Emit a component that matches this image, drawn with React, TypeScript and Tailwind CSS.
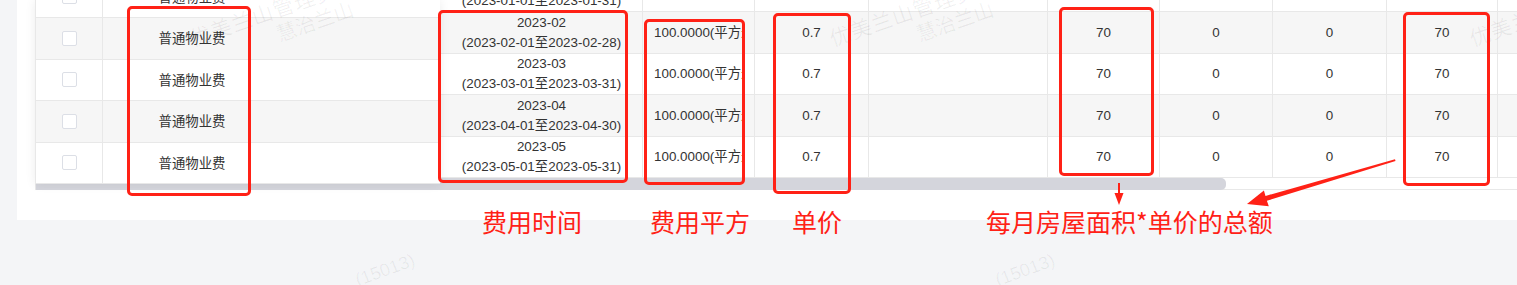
import { clsx as cn } from 'clsx';

const grid =
  'grid grid-cols-[68px_178px_160px_202px_112px_114px_179px_112px_113px_114px_111px_1fr]';
const fixedGrid = 'grid grid-cols-[68px_178px_159px]';
const line = 'border-[#e8e8e8]';

const rows = [
  { month: '2023-01', range: '(2023-01-01至2023-01-31)', stripe: false },
  { month: '2023-02', range: '(2023-02-01至2023-02-28)', stripe: true },
  { month: '2023-03', range: '(2023-03-01至2023-03-31)', stripe: false },
  { month: '2023-04', range: '(2023-04-01至2023-04-30)', stripe: true },
  { month: '2023-05', range: '(2023-05-01至2023-05-31)', stripe: false },
];

const boxes = [
  'left-[127px] top-[6px] w-[124px] h-[190px]',
  'left-[438px] top-[10px] w-[190px] h-[173px]',
  'left-[644px] top-[19px] w-[101px] h-[166px]',
  'left-[773px] top-[13px] w-[78px] h-[181px]',
  'left-[1059px] top-[7px] w-[95px] h-[169px]',
  'left-[1403px] top-[12px] w-[87px] h-[174px]',
];

const labels = [
  { text: '费用时间', pos: 'left-[482px]' },
  { text: '费用平方', pos: 'left-[650px]' },
  { text: '单价', pos: 'left-[792px]' },
  { text: '每月房屋面积*单价的总额', pos: 'left-[986px]' },
];

function FixedCells() {
  return (
    <>
      <div className={cn('flex items-center justify-center border-x', line)}>
        <span className="h-[15px] w-[15px] rounded-[2px] border border-[#dcdfe6] bg-white" />
      </div>
      <div className="flex items-center justify-center pt-[2px]">普通物业费</div>
      <div />
    </>
  );
}

function BodyRow({ month, range, stripe }: { month: string; range: string; stripe: boolean }) {
  const num = cn('flex items-center justify-center border-r', line);
  return (
    <div className={cn(grid, 'h-[41.5px] border-b', line, stripe ? 'bg-[#f6f6f6]' : 'bg-white')}>
      <FixedCells />
      <div className={cn('flex flex-col items-center justify-center border-r leading-[20px]', line)}>
        <span>{month}</span>
        <span>{range}</span>
      </div>
      <div className={cn('flex items-center border-r pl-[11px]', line)}>
        <div className="w-[88px] overflow-hidden whitespace-nowrap">100.0000(平方米)</div>
      </div>
      <div className={num}>0.7</div>
      <div className={cn('border-r', line)} />
      <div className={num}>70</div>
      <div className={num}>0</div>
      <div className={num}>0</div>
      <div className={num}>70</div>
      <div />
    </div>
  );
}

function Watermark({ left }: { left: number }) {
  return (
    <>
      <div
        className="absolute top-[4px] -rotate-[19deg] whitespace-nowrap text-[21px] leading-none tracking-[1px] text-black/[0.06]"
        style={{ left: 186 + left }}
      >
        优美兰山管理员
      </div>
      <div
        className="absolute top-[12px] -rotate-[19deg] whitespace-nowrap text-[20px] leading-none text-black/[0.06]"
        style={{ left: 275 + left }}
      >
        慧治兰山
      </div>
      <div
        className="absolute top-[261px] -rotate-[20deg] whitespace-nowrap text-[18px] leading-none text-black/[0.06]"
        style={{ left: 354 + left }}
      >
        (15013)
      </div>
    </>
  );
}

export default function App() {
  return (
    <div
      className="relative h-[285px] w-[1517px] overflow-hidden bg-[#f4f5f7]"
      style={{ fontFamily: '"Liberation Sans", "Noto Sans CJK SC", sans-serif' }}
    >
      <div className="ml-[17px] h-[220px] bg-white pl-[18px]">
        <div className="relative text-[13.4px] text-[#333]">
          {/* scrolling body */}
          <div className="overflow-hidden">
            <div className="-mt-[29.2px]">
              {rows.map((r) => (
                <BodyRow key={r.month} {...r} />
              ))}
            </div>
            <div className={cn('h-[12px] border-b border-l', line)}>
              <div className="h-[11.5px] w-[1190px] rounded-r-[5px] bg-[#d4d5dc]" />
            </div>
          </div>

          {/* fixed left columns */}
          <div className="absolute left-0 top-0 h-[184px] w-[405px] overflow-hidden bg-white shadow-[0_0_10px_rgba(0,0,0,0.08)]">
            <div className="-mt-[23.5px]">
              {rows.map((r) => (
                <div
                  key={r.month}
                  className={cn(fixedGrid, 'h-[41.5px] border-b', line, r.stripe ? 'bg-[#f6f6f6]' : 'bg-white')}
                >
                  <FixedCells />
                </div>
              ))}
            </div>
          </div>
        </div>
      </div>

      <div className="pointer-events-none absolute inset-0">
        {[0, 640, 1280].map((x) => (
          <Watermark key={x} left={x} />
        ))}
      </div>

      {boxes.map((b) => (
        <div key={b} className={cn('absolute rounded-[5px] border-[3px] border-[#ff2116]', b)} />
      ))}

      {labels.map((l) => (
        <div
          key={l.text}
          className={cn('absolute top-[209px] text-[25px] leading-none text-[#ff2116]', l.pos)}
          style={{ fontFamily: '"Noto Sans CJK SC", sans-serif' }}
        >
          {l.text}
        </div>
      ))}

      <svg className="pointer-events-none absolute inset-0" width="1517" height="285">
        <line x1="1119" y1="183" x2="1119" y2="195" stroke="#ff2116" strokeWidth="2" />
        <polygon points="1114.5,193 1123.5,193 1119,205" fill="#ff2116" />
        <polygon
          points="1395,159.3 1265.5,195.9 1263.9,190.4 1247,204 1268.8,206.3 1266.9,200.7 1395.5,161"
          fill="#ff2116"
        />
      </svg>
    </div>
  );
}
